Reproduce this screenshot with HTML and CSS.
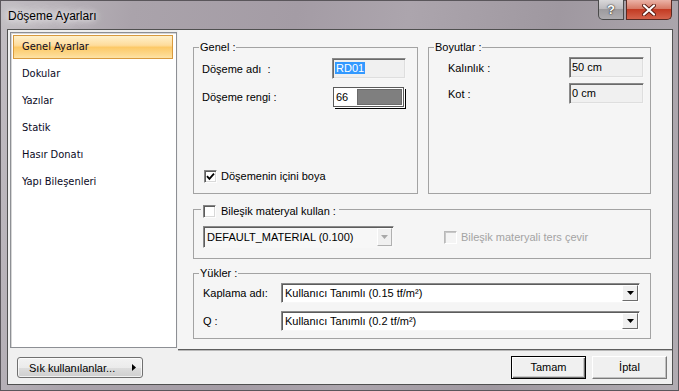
FILE: index.html
```html
<!DOCTYPE html>
<html lang="tr">
<head>
    <meta charset="UTF-8">
    <meta name="viewport" content="width=device-width, initial-scale=1.0">
    <title>Döşeme Ayarları</title>
    <link rel="stylesheet" href="styles.css">
</head>
<body>
    <div class="titlebar">
        <span class="title">Döşeme Ayarları</span>
        <div class="caption-buttons">
            <div class="cap-btn help">?</div>
            <div class="cap-btn close">
                <svg width="14" height="12" viewBox="0 0 14 12">
                    <path d="M2 1.5l10 9M12 1.5l-10 9" stroke="#5a1a10" stroke-width="4" stroke-linecap="round"/>
                    <path d="M2 1.5l10 9M12 1.5l-10 9" stroke="#fff" stroke-width="2.2" stroke-linecap="round"/>
                </svg>
            </div>
        </div>
    </div>

    <div class="client">
        <div class="top">
            <ul class="sidebar">
                <li class="active">Genel Ayarlar</li>
                <li>Dokular</li>
                <li>Yazılar</li>
                <li>Statik</li>
                <li>Hasır Donatı</li>
                <li>Yapı Bileşenleri</li>
            </ul>

            <div class="main">
                <div class="row">
                    <div class="group genel">
                        <span class="group-title">Genel :</span>
                        <div class="field">
                            <span>Döşeme adı&nbsp; :</span>
                            <div class="textbox"><span class="selected">RD01</span></div>
                        </div>
                        <div class="field second">
                            <span>Döşeme rengi :</span>
                            <div class="color-box">
                                <span class="color-value">66</span>
                                <span class="color-swatch"></span>
                            </div>
                        </div>
                        <label class="check-row">
                            <span class="checkbox">
                                <svg width="9" height="9" viewBox="0 0 9 9"><path d="M1 4.2l2.4 2.6L8 1.6" fill="none" stroke="#000" stroke-width="1.8"/></svg>
                            </span>
                            Döşemenin içini boya
                        </label>
                    </div>

                    <div class="group boyutlar">
                        <span class="group-title">Boyutlar :</span>
                        <div class="field">
                            <span>Kalınlık :</span>
                            <div class="textbox">50 cm</div>
                        </div>
                        <div class="field second">
                            <span>Kot :</span>
                            <div class="textbox">0 cm</div>
                        </div>
                    </div>
                </div>

                <div class="group bilesik">
                    <label class="group-title check-title">
                        <span class="checkbox"></span>
                        Bileşik materyal kullan :
                    </label>
                    <div class="bilesik-body">
                        <div class="combo disabled-combo">
                            <span class="combo-text">DEFAULT_MATERIAL (0.100)</span>
                            <span class="combo-btn">
                                <svg width="7" height="4" viewBox="0 0 7 4"><path d="M0 0h7L3.5 4z" fill="#a8a8a8"/></svg>
                            </span>
                        </div>
                        <label class="check-row disabled">
                            <span class="checkbox"></span>
                            Bileşik materyali ters çevir
                        </label>
                    </div>
                </div>

                <div class="group yukler">
                    <span class="group-title">Yükler :</span>
                    <div class="load-row">
                        <span>Kaplama adı:</span>
                        <div class="combo">
                            <span class="combo-text">Kullanıcı Tanımlı (0.15 tf/m²)</span>
                            <span class="combo-btn">
                                <svg width="7" height="4" viewBox="0 0 7 4"><path d="M0 0h7L3.5 4z" fill="#000"/></svg>
                            </span>
                        </div>
                    </div>
                    <div class="load-row second">
                        <span>Q :</span>
                        <div class="combo">
                            <span class="combo-text">Kullanıcı Tanımlı (0.2 tf/m²)</span>
                            <span class="combo-btn">
                                <svg width="7" height="4" viewBox="0 0 7 4"><path d="M0 0h7L3.5 4z" fill="#000"/></svg>
                            </span>
                        </div>
                    </div>
                </div>
            </div>
        </div>

        <div class="bottom">
            <button class="fav-button">
                Sık kullanılanlar...
                <svg width="4" height="7" viewBox="0 0 4 7"><path d="M0 0l4 3.5L0 7z" fill="#000"/></svg>
            </button>
            <div class="dialog-buttons">
                <button class="dlg-btn default">Tamam</button>
                <button class="dlg-btn">İptal</button>
            </div>
        </div>
    </div>
</body>
</html>
```

FILE: styles.css
```css
* {
    box-sizing: border-box;
}

html, body {
    margin: 0;
    padding: 0;
}

body {
    width: 679px;
    height: 391px;
    overflow: hidden;
    font-family: 'Liberation Sans', Arial, sans-serif;
    font-size: 11px;
    color: #000;
    background: linear-gradient(100deg, #c2bec3 0%, #aaa3ab 18%, #a49ca5 40%, #aca5ad 55%, #9f98a0 75%, #b1acb2 100%);
    box-shadow: inset 0 0 0 1px #5a565b;
}

/* title bar */
.titlebar {
    height: 29px;
    display: flex;
    justify-content: space-between;
    align-items: flex-start;
    padding-left: 8px;
}

.title {
    margin-top: 9px;
    line-height: 15px;
    font-size: 12px;
    text-shadow: 0 0 6px #fff, 0 0 12px rgba(255, 255, 255, 0.9), 0 0 16px rgba(255, 255, 255, 0.7);
}

.caption-buttons {
    display: flex;
    gap: 2px;
    margin-right: 7px;
}

.cap-btn {
    height: 20px;
    display: flex;
    align-items: center;
    justify-content: center;
    border: 1px solid #4a4a4a;
    border-top: none;
}

.help {
    width: 26px;
    border-radius: 0 0 0 5px;
    background: linear-gradient(#d9d8da, #bdbbbe 45%, #9d9b9e 50%, #aeacaf);
    color: #fff;
    font-weight: bold;
    font-size: 13px;
    text-shadow: 0 0 2px #333, 0 0 1px #000;
}

.close {
    width: 46px;
    border-radius: 0 0 5px 0;
    border-color: #5a2a22;
    background: linear-gradient(#ebb3a7, #d77a66 45%, #c33b23 50%, #d4634c);
}

/* client area */
.client {
    margin: 0 6px 0 7px;
    height: 356px;
    border: 1px solid #505050;
    background: #f0f0f0;
    display: flex;
    flex-direction: column;
}

.top {
    display: flex;
    height: 320px;
}

.sidebar {
    list-style: none;
    margin: 2px 0 0 2px;
    width: 167px;
    height: 316px;
    padding: 2px 3px 0 2px;
    border: 1px solid #8d8f94;
    box-shadow: inset 1px 1px 0 #d6d6d6;
    background: #fff;
    display: flex;
    flex-direction: column;
    gap: 3px;
    font-family: 'DejaVu Sans Condensed', 'Liberation Sans', sans-serif;
    font-size: 11px;
    color: #0a0a1e;
}

.sidebar li {
    height: 24px;
    line-height: 22px;
    padding-left: 8px;
    border: 1px solid transparent;
}

.sidebar li.active {
    border-color: #d89a3e;
    background: linear-gradient(#fff1cc, #fedc9c 42%, #fcc968 52%, #fdd98e 85%, #fee3a6);
}

.main {
    margin-left: 1px;
    width: 494px;
    height: 320px;
    padding: 17px 0 0 15px;
    background: #f5f5f5;
    border-bottom: 1px solid #5e5e5e;
    box-shadow: 0 1px 0 #b8b8b8;
}

.row {
    display: flex;
    gap: 10px;
}

/* group boxes */
.group {
    position: relative;
    border: 1px solid #a3a3a3;
}

.group-title {
    position: absolute;
    top: -8px;
    left: 5px;
    padding: 0 1px;
    line-height: 14px;
    background: #f5f5f5;
}

.genel {
    width: 225px;
    height: 147px;
    padding: 10px 10px 10px 8px;
    display: flex;
    flex-direction: column;
}

.boyutlar {
    width: 223px;
    height: 147px;
    padding: 9px 6px 0 19px;
}

.field {
    display: grid;
    align-items: center;
}

.genel .field {
    grid-template-columns: 130px 74px;
    height: 21px;
}

.genel .field.second {
    margin-top: 7px;
}

.boyutlar .field {
    grid-template-columns: 121px 75px;
    height: 21px;
}

.boyutlar .field.second {
    margin-top: 5px;
}

.textbox {
    height: 21px;
    padding: 2px 0 0 2px;
    line-height: 15px;
    background: #f0f0f0;
    border: 1px solid;
    border-color: #8a8a8a #f7f7f7 #f7f7f7 #8a8a8a;
    box-shadow: inset 1px 1px 0 #6a6a6a, inset -1px -1px 0 #dedede;
}

.selected {
    background: #3399ff;
    color: #fff;
    padding: 0 1px;
}

.color-box {
    width: 71px;
    height: 20px;
    margin-left: 1px;
    display: flex;
    border: 1px solid #5a5a5a;
    box-shadow: 1px 1px 0 #fff, 2px 2px 0 #000;
    background: #fff;
}

.color-value {
    width: 23px;
    padding-left: 2px;
    line-height: 18px;
}

.color-swatch {
    flex: 1;
    margin: 1px 1px 1px 0;
    background: #7f7f7f;
    border: 1px solid #6a6a6a;
}

/* checkboxes */
.check-row {
    display: flex;
    align-items: center;
    gap: 4px;
    line-height: 14px;
}

.genel .check-row {
    margin-top: auto;
    margin-left: 2px;
}

.checkbox {
    width: 13px;
    height: 13px;
    display: flex;
    align-items: center;
    justify-content: center;
    background: #fff;
    border: 1px solid;
    border-color: #858585 #fdfdfd #fdfdfd #858585;
    box-shadow: inset 1px 1px 0 #5c5c5c, inset -1px -1px 0 #d8d8d8;
}

.check-row.disabled {
    color: #a3a3a3;
}

.check-row.disabled .checkbox {
    background: #f4f4f4;
    border-color: #b9b9b9 #fff #fff #b9b9b9;
    box-shadow: inset 1px 1px 0 #c8c8c8;
}

.check-title {
    display: flex;
    align-items: center;
    gap: 5px;
    left: 7px;
    padding: 0 3px 0 2px;
    top: -6px;
}

.bilesik {
    width: 458px;
    height: 50px;
    margin-top: 15px;
}

.bilesik-body {
    display: flex;
    align-items: center;
    padding: 16px 0 0 9px;
}

.bilesik .check-row {
    margin-left: 50px;
}

/* combo boxes */
.combo {
    display: flex;
    height: 20px;
    background: #fff;
    border: 1px solid;
    border-color: #8a8a8a #f7f7f7 #f7f7f7 #8a8a8a;
    box-shadow: inset 1px 1px 0 #5c5c5c;
}

.combo-text {
    flex: 1;
    padding: 2px 0 0 3px;
    line-height: 15px;
    white-space: nowrap;
}

.combo-btn {
    width: 16px;
    margin: 1px 1px 1px 0;
    display: flex;
    align-items: center;
    justify-content: center;
    background: #f0f0f0;
    border: 1px solid;
    border-color: #fff #6d6d6d #6d6d6d #fff;
}

.disabled-combo {
    width: 191px;
    height: 22px;
    background: #f7f7f7;
}

.disabled-combo .combo-text {
    padding-top: 3px;
}

.disabled-combo .combo-btn {
    width: 15px;
    border-color: #fff #b0b0b0 #b0b0b0 #fff;
}

.yukler {
    width: 458px;
    height: 66px;
    margin-top: 14px;
    padding: 9px 0 0 9px;
}

.load-row {
    display: grid;
    grid-template-columns: 78px 359px;
    align-items: center;
}

.load-row.second {
    margin-top: 8px;
}

/* bottom buttons */
.bottom {
    flex: 1;
    display: flex;
    align-items: center;
    justify-content: space-between;
    padding: 0 5px 0 9px;
}

button {
    font-family: 'Liberation Sans', Arial, sans-serif;
    font-size: 11px;
    color: #000;
    cursor: pointer;
}

.fav-button {
    width: 126px;
    height: 21px;
    margin-top: 1px;
    display: flex;
    align-items: center;
    justify-content: space-between;
    padding: 0 6px 0 11px;
    border: 1px solid #707070;
    border-radius: 3px;
    background: linear-gradient(#f2f2f2, #ebebeb 50%, #dddddd 50%, #cfcfcf);
    box-shadow: inset 0 0 0 1px rgba(255, 255, 255, 0.7);
}

.dialog-buttons {
    display: flex;
    gap: 6px;
}

.dlg-btn {
    width: 75px;
    height: 23px;
    padding: 0;
    background: #f0f0f0;
    border: 1px solid;
    border-color: #fff #7a7a7a #7a7a7a #fff;
    box-shadow: inset -1px -1px 0 #c0c0c0;
}

.dlg-btn.default {
    border: 1px solid #000;
    box-shadow: inset 1px 1px 0 #fff, inset -1px -1px 0 #6d6d6d, inset -2px -2px 0 #c8c8c8;
}
```
